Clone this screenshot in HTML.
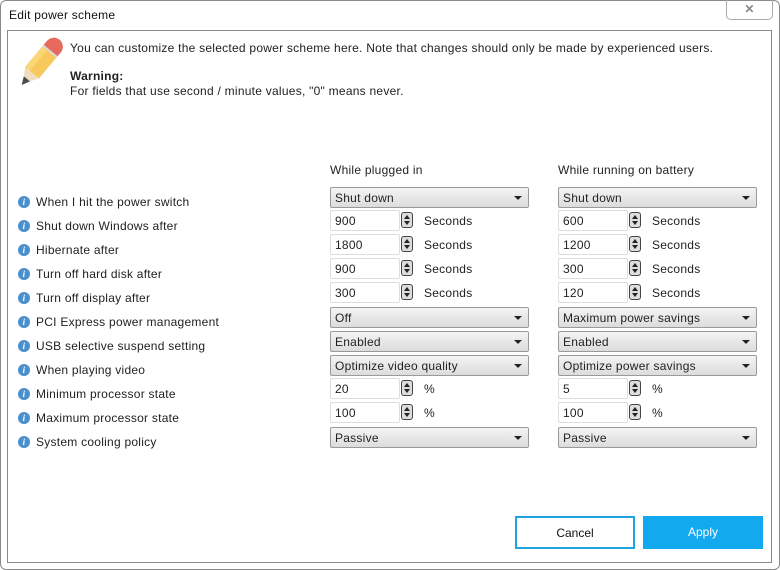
<!DOCTYPE html>
<html><head><style>
*{box-sizing:border-box;margin:0;padding:0}
body{width:780px;height:570px;background:#fff;font-family:"Liberation Sans",sans-serif;font-size:12px;letter-spacing:0.25px;color:#222;position:relative;overflow:hidden}
.frame{position:absolute;left:0;top:0;width:780px;height:570px;border:1px solid #8a8a8a;border-radius:6px}
.title{position:absolute;left:9px;top:8px;font-size:12px;color:#111}
.close{position:absolute;left:726px;top:0;width:47px;height:20px;border:1px solid #aaa;border-top:none;border-radius:0 0 5px 5px;text-align:center;color:#888;font-size:12px;line-height:18px;font-weight:bold}
.panel{position:absolute;left:7px;top:30px;width:765px;height:533px;border:1px solid #8a8a8a}
.a{position:absolute;white-space:nowrap}
.lbl{position:absolute;left:18px;white-space:nowrap;font-size:12px}
.lbl i{position:absolute;left:0;top:1px;width:12px;height:12px;border-radius:50%;background:#4a90d0;color:#fff;font-size:9px;font-style:italic;font-weight:bold;text-align:center;line-height:12px;font-family:"Liberation Serif",serif}
.lbl span{position:absolute;left:18px;top:0}
.dd{position:absolute;width:199px;height:21px;border:1px solid #9a9a9a;border-radius:2px;background:linear-gradient(#f4f4f4,#dcdcdc);padding:3px 4px;font-size:12px}
.dd:after{content:"";position:absolute;right:6px;top:8px;border-left:4px solid transparent;border-right:4px solid transparent;border-top:4px solid #222}
.sp{position:absolute;width:70px;height:21px;border:1px solid #ddd;border-radius:2px;padding:3px 4px;font-size:12px}
.sb{position:absolute;width:12px;height:16px;border:1px solid #444;border-radius:3px;background:#ddd}
.sb:before{content:"";position:absolute;left:2px;top:2px;border-left:3px solid transparent;border-right:3px solid transparent;border-bottom:4px solid #222}
.sb:after{content:"";position:absolute;left:2px;top:8px;border-left:3px solid transparent;border-right:3px solid transparent;border-top:4px solid #222}
.btn{position:absolute;top:516px;width:120px;height:33px;text-align:center;line-height:31px;font-size:12px;letter-spacing:0}
</style></head><body>
<div class="frame"></div>
<div class="title">Edit power scheme</div>
<div class="close">✕</div>
<div class="panel"></div>
<svg class="a" style="left:14px;top:36px" width="54" height="52" viewBox="0 0 54 52">
<g transform="translate(27,26) rotate(-50)">
<rect x="-14" y="-9" width="28" height="18" fill="#f7c95c"/>
<rect x="-14" y="-9" width="28" height="6" fill="#f9d676"/>
<path d="M14,-9 L20,-9 A9,9 0 0 1 20,9 L14,9 Z" fill="#e86a5c"/>
<rect x="13" y="-9" width="2" height="18" fill="#d9d9d9"/>
<polygon points="-14,-9 -14,9 -28,0" fill="#f0ddc0"/>
<polygon points="-22,-4 -22,4 -30,0" fill="#4a4a4a"/>
</g>
</svg>
<div class="a" style="left:70px;top:41px">You can customize the selected power scheme here. Note that changes should only be made by experienced users.</div>
<div class="a" style="left:70px;top:69px;font-weight:bold">Warning:</div>
<div class="a" style="left:70px;top:84px">For fields that use second / minute values, "0" means never.</div>
<div class="a" style="left:330px;top:163px">While plugged in</div>
<div class="a" style="left:558px;top:163px">While running on battery</div>

<div class="lbl" style="top:195px"><i>i</i><span>When I hit the power switch</span></div>
<div class="lbl" style="top:219px"><i>i</i><span>Shut down Windows after</span></div>
<div class="lbl" style="top:243px"><i>i</i><span>Hibernate after</span></div>
<div class="lbl" style="top:267px"><i>i</i><span>Turn off hard disk after</span></div>
<div class="lbl" style="top:291px"><i>i</i><span>Turn off display after</span></div>
<div class="lbl" style="top:315px"><i>i</i><span>PCI Express power management</span></div>
<div class="lbl" style="top:339px"><i>i</i><span>USB selective suspend setting</span></div>
<div class="lbl" style="top:363px"><i>i</i><span>When playing video</span></div>
<div class="lbl" style="top:387px"><i>i</i><span>Minimum processor state</span></div>
<div class="lbl" style="top:411px"><i>i</i><span>Maximum processor state</span></div>
<div class="lbl" style="top:435px"><i>i</i><span>System cooling policy</span></div>

<div class="dd" style="left:330px;top:187px">Shut down</div>
<div class="dd" style="left:558px;top:187px">Shut down</div>

<div class="sp" style="left:330px;top:210px">900</div><div class="sb" style="left:401px;top:212px"></div><div class="a" style="left:424px;top:214px">Seconds</div>
<div class="sp" style="left:558px;top:210px">600</div><div class="sb" style="left:629px;top:212px"></div><div class="a" style="left:652px;top:214px">Seconds</div>
<div class="sp" style="left:330px;top:234px">1800</div><div class="sb" style="left:401px;top:236px"></div><div class="a" style="left:424px;top:238px">Seconds</div>
<div class="sp" style="left:558px;top:234px">1200</div><div class="sb" style="left:629px;top:236px"></div><div class="a" style="left:652px;top:238px">Seconds</div>
<div class="sp" style="left:330px;top:258px">900</div><div class="sb" style="left:401px;top:260px"></div><div class="a" style="left:424px;top:262px">Seconds</div>
<div class="sp" style="left:558px;top:258px">300</div><div class="sb" style="left:629px;top:260px"></div><div class="a" style="left:652px;top:262px">Seconds</div>
<div class="sp" style="left:330px;top:282px">300</div><div class="sb" style="left:401px;top:284px"></div><div class="a" style="left:424px;top:286px">Seconds</div>
<div class="sp" style="left:558px;top:282px">120</div><div class="sb" style="left:629px;top:284px"></div><div class="a" style="left:652px;top:286px">Seconds</div>

<div class="dd" style="left:330px;top:307px">Off</div>
<div class="dd" style="left:558px;top:307px">Maximum power savings</div>
<div class="dd" style="left:330px;top:331px">Enabled</div>
<div class="dd" style="left:558px;top:331px">Enabled</div>
<div class="dd" style="left:330px;top:355px">Optimize video quality</div>
<div class="dd" style="left:558px;top:355px">Optimize power savings</div>

<div class="sp" style="left:330px;top:378px">20</div><div class="sb" style="left:401px;top:380px"></div><div class="a" style="left:424px;top:382px">%</div>
<div class="sp" style="left:558px;top:378px">5</div><div class="sb" style="left:629px;top:380px"></div><div class="a" style="left:652px;top:382px">%</div>
<div class="sp" style="left:330px;top:402px">100</div><div class="sb" style="left:401px;top:404px"></div><div class="a" style="left:424px;top:406px">%</div>
<div class="sp" style="left:558px;top:402px">100</div><div class="sb" style="left:629px;top:404px"></div><div class="a" style="left:652px;top:406px">%</div>

<div class="dd" style="left:330px;top:427px">Passive</div>
<div class="dd" style="left:558px;top:427px">Passive</div>

<div class="btn" style="left:515px;border:2px solid #1ea5e0;background:#fff;color:#111">Cancel</div>
<div class="btn" style="left:643px;background:#12a9ef;color:#fff;line-height:33px">Apply</div>
</body></html>
